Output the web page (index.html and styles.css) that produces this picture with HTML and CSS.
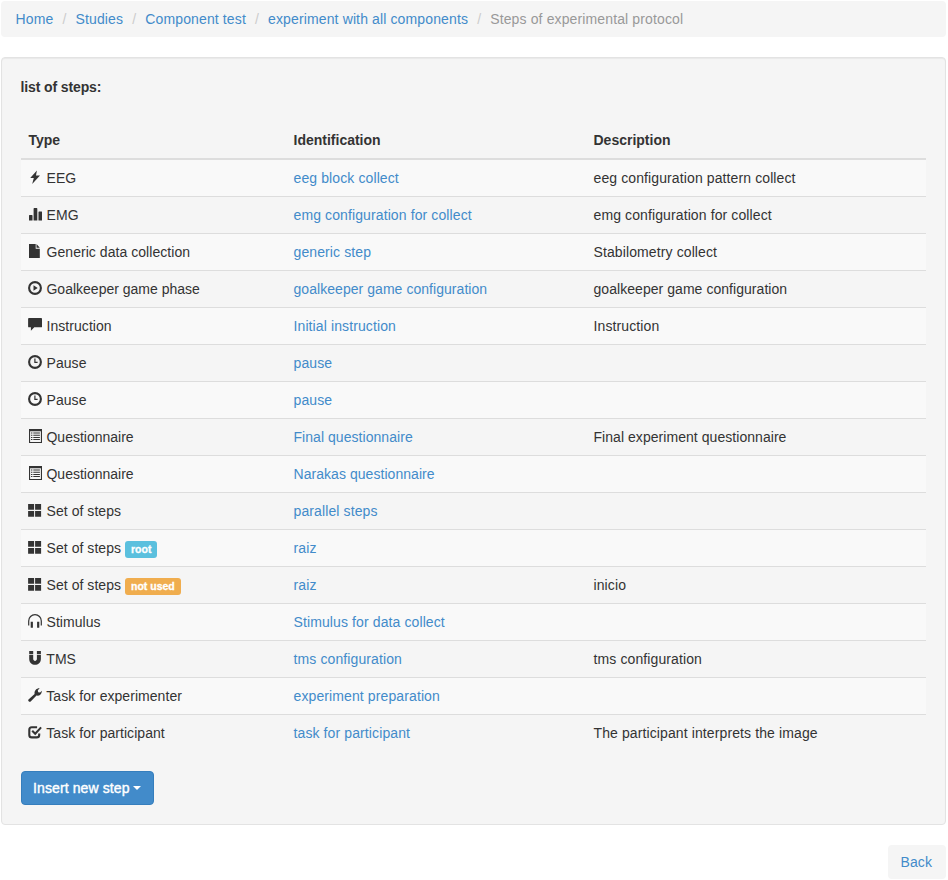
FILE: index.html
```html
<!DOCTYPE html>
<html lang="en">
<head>
<meta charset="utf-8">
<title>Steps of experimental protocol</title>
<link rel="stylesheet" href="styles.css">
</head>
<body>
<svg class="sprite" aria-hidden="true">
  <symbol id="bolt" viewBox="0 0 14 14"><path d="M8.9.4 2.2 8H5.8L4.2 13.9 12 5.4H8Z"/></symbol>
  <symbol id="bars" viewBox="0 0 14 14"><path d="M1 8.6q0-.6.6-.6h2.3q.6 0 .6.6V13.6H1ZM5.6 1.7q0-.6.6-.6h2.5q.6 0 .6.6V13.6H5.6ZM10.5 5.2q0-.6.6-.6h2.4q.6 0 .6.6V13.6h-3.6Z"/></symbol>
  <symbol id="file" viewBox="0 0 14 14"><path d="M1 0h6.7v4.7h4.1V14H1ZM8.5 0l3.3 3.8H8.5Z"/></symbol>
  <symbol id="play" viewBox="0 0 14 14"><circle class="line" cx="7" cy="7" r="5.9"/><path d="M5.5 4.3 9.7 7 5.5 9.7Z"/></symbol>
  <symbol id="comment" viewBox="0 0 14 14"><path d="M1 0h12.2q.9 0 .9.9V8.4q0 .9-.9.9H6.3L2.9 12.7V9.3H1q-.9 0-.9-.9V.9Q.1 0 1 0Z"/></symbol>
  <symbol id="clock" viewBox="0 0 14 14"><circle class="line" cx="7" cy="7" r="5.9"/><path class="thin" d="M6.9 3.4v3.9h2.7"/></symbol>
  <symbol id="list" viewBox="0 0 14 14"><path fill-rule="evenodd" d="M1 0h13v14H1ZM2.1 2.2V13h10.8V2.2Z"/><path d="M3 3.5h1.4v1H3zM5.3 3.5h6.6v1H5.3zM3 5.7h1.4v1H3zM5.3 5.7h6.6v1H5.3zM3 7.9h1.4v1H3zM5.3 7.9h6.6v1H5.3zM3 10.1h1.4v1H3zM5.3 10.1h6.6v1H5.3z"/></symbol>
  <symbol id="grid" viewBox="0 0 14 14"><path d="M.1 1h6v5.7h-6zM7.1 1h6v5.7h-6zM.1 8h6v5.8h-6zM7.1 8h6v5.8h-6z"/></symbol>
  <symbol id="phones" viewBox="0 0 14 14"><path class="thin" d="M.7 11.5V7a6.3 6.3 0 0 1 12.6 0v4.5"/><path d="M2.7 7.8h2.2v6H3.3q-.6 0-.6-.6zM9.1 7.8h2.2v5.4q0 .6-.6.6H9.1z"/></symbol>
  <symbol id="magnet" viewBox="0 0 14 14"><path d="M1.2 0h4v2.9h-4zM8.9 0h4v2.9h-4zM1.2 3.7h4v4.4c0 2.4 3.7 2.4 3.7 0V3.7h4V8c0 7.7-11.7 7.7-11.7 0Z"/></symbol>
  <symbol id="wrench" viewBox="0 0 14 14"><path d="M.5 11.4 6.6 6C6 3 8.3-.1 11.7.2L9.8 2.3l.4 1.9 1.9.4 1.7-1.9c.3 3.3-2.6 5.5-5.3 4.8L2.7 13.5c-1.3 1.1-3.3-.8-2.2-2.1Z"/></symbol>
  <symbol id="check" viewBox="0 0 14 14"><path class="line" d="M9.1 2.2H3.8Q1.3 2.2 1.3 4.7v5.2q0 2.5 2.5 2.5h4.9q2.5 0 2.5-2.5V8.6"/><path class="line" d="m4.2 5.8 3 3 5.9-6.4"/></symbol>
</svg>

<ol class="breadcrumb">
  <li><a href="#">Home</a></li>
  <li><a href="#">Studies</a></li>
  <li><a href="#">Component test</a></li>
  <li><a href="#">experiment with all components</a></li>
  <li class="active">Steps of experimental protocol</li>
</ol>

<main class="well">
  <p class="heading">list of steps:</p>
  <table class="table">
    <thead>
      <tr><th class="col-type">Type</th><th class="col-id">Identification</th><th>Description</th></tr>
    </thead>
    <tbody>
      <tr><td><svg class="icon"><use href="#bolt"/></svg> EEG</td><td><a href="#">eeg block collect</a></td><td>eeg configuration pattern collect</td></tr>
      <tr><td><svg class="icon"><use href="#bars"/></svg> EMG</td><td><a href="#">emg configuration for collect</a></td><td>emg configuration for collect</td></tr>
      <tr><td><svg class="icon"><use href="#file"/></svg> Generic data collection</td><td><a href="#">generic step</a></td><td>Stabilometry collect</td></tr>
      <tr class="tight"><td><svg class="icon"><use href="#play"/></svg> Goalkeeper game phase</td><td><a href="#">goalkeeper game configuration</a></td><td>goalkeeper game configuration</td></tr>
      <tr><td><svg class="icon"><use href="#comment"/></svg> Instruction</td><td><a href="#">Initial instruction</a></td><td>Instruction</td></tr>
      <tr><td><svg class="icon"><use href="#clock"/></svg> Pause</td><td><a href="#">pause</a></td><td></td></tr>
      <tr><td><svg class="icon"><use href="#clock"/></svg> Pause</td><td><a href="#">pause</a></td><td></td></tr>
      <tr class="tight"><td><svg class="icon"><use href="#list"/></svg> Questionnaire</td><td><a href="#">Final questionnaire</a></td><td>Final experiment questionnaire</td></tr>
      <tr class="tight"><td><svg class="icon"><use href="#list"/></svg> Questionnaire</td><td><a href="#">Narakas questionnaire</a></td><td></td></tr>
      <tr><td><svg class="icon"><use href="#grid"/></svg> Set of steps</td><td><a href="#">parallel steps</a></td><td></td></tr>
      <tr><td><svg class="icon"><use href="#grid"/></svg> Set of steps <span class="label label-info">root</span></td><td><a href="#">raiz</a></td><td></td></tr>
      <tr><td><svg class="icon"><use href="#grid"/></svg> Set of steps <span class="label label-warning">not used</span></td><td><a href="#">raiz</a></td><td>inicio</td></tr>
      <tr><td><svg class="icon"><use href="#phones"/></svg> Stimulus</td><td><a href="#">Stimulus for data collect</a></td><td></td></tr>
      <tr><td><svg class="icon"><use href="#magnet"/></svg> TMS</td><td><a href="#">tms configuration</a></td><td>tms configuration</td></tr>
      <tr><td><svg class="icon"><use href="#wrench"/></svg> Task for experimenter</td><td><a href="#">experiment preparation</a></td><td></td></tr>
      <tr><td><svg class="icon"><use href="#check"/></svg> Task for participant</td><td><a href="#">task for participant</a></td><td>The participant interprets the image</td></tr>
    </tbody>
  </table>
  <button class="btn btn-primary" type="button">Insert new step<span class="caret"></span></button>
</main>

<div class="actions"><a class="btn btn-back" href="#">Back</a></div>
</body>
</html>
```
FILE: styles.css
```css
* { box-sizing: border-box; }

body {
  margin: 0;
  padding: 1px 2px 0 1px;
  background: #fff;
  color: #333;
  font: 14px/20px "Liberation Sans", Arial, sans-serif;
  letter-spacing: 0.11px;
}

a { color: #428bca; text-decoration: none; }

.sprite { display: none; }

.breadcrumb {
  display: flex;
  height: 36px;
  margin: 0 0 20px;
  padding: 8px 14.5px;
  list-style: none;
  background: #f5f5f5;
  border-radius: 4px;
  letter-spacing: 0.13px;
}

.breadcrumb li + li::before {
  content: "/\00a0";
  padding: 0 5px 0 9.1px;
  color: #ccc;
}

.breadcrumb .active { color: #999; }

.well {
  height: 768px;
  padding: 19px;
  background: #f5f5f5;
  border: 1px solid #e3e3e3;
  border-radius: 4px;
  box-shadow: inset 0 1px 1px rgba(0, 0, 0, 0.05);
}

.heading {
  margin: 0 0 25px -0.5px;
  font-weight: bold;
  letter-spacing: -0.12px;
}

.table {
  width: 905px;
  margin-bottom: 20px;
  table-layout: fixed;
  border-spacing: 0;
}

.col-type { width: 264px; }
.col-id { width: 300px; }

th, td {
  padding: 8px 8px 8px 8.5px;
  text-align: left;
  vertical-align: top;
}

th { height: 38px; border-bottom: 2px solid #ddd; letter-spacing: 0; }
td { height: 37px; border-top: 1px solid #ddd; }
th:first-child, td:first-child { padding-left: 7.5px; }
td:first-child { letter-spacing: 0.05px; }
.tight td { letter-spacing: 0.05px; }
.tight td:first-child { letter-spacing: 0; }
tbody tr:first-child td { height: 36px; border-top: 0; }
tbody tr:nth-child(odd) { background: #f9f9f9; }

.icon {
  width: 14px;
  height: 14px;
  margin-left: -0.3px;
  margin-right: 0.4px;
  vertical-align: -1px;
  overflow: visible;
  fill: #333;
}

.line { fill: none; stroke: #333; stroke-width: 2.1; }
.thin { fill: none; stroke: #333; stroke-width: 1.2; }

.label {
  display: inline-block;
  height: 17px;
  margin: -2px 0 -5px;
  padding: 0 6px;
  border-radius: 3px;
  color: #fff;
  font-size: 10.5px;
  font-weight: bold;
  line-height: 17px;
  letter-spacing: 0;
  vertical-align: 0;
  -webkit-text-stroke: 0.3px #fff;
}

.label-info { background: #5bc0de; }
.label-warning { background: #f0ad4e; }

.btn {
  display: inline-flex;
  align-items: center;
  height: 34px;
  padding: 6px 12px;
  border: 1px solid transparent;
  border-radius: 4px;
  font: inherit;
  letter-spacing: inherit;
}

.btn-primary {
  width: 133px;
  padding: 6px 11px;
  color: #fff;
  background: #428bca;
  border-color: #357ebd;
  -webkit-text-stroke: 0.4px #fff;
}

.caret {
  margin-left: 3px;
  border-top: 4px solid #fff;
  border-right: 4px solid transparent;
  border-left: 4px solid transparent;
}

.actions {
  display: flex;
  justify-content: flex-end;
  margin-top: 20px;
}

.btn-back { width: 58px; padding: 6px 11.5px; background: #f5f5f5; }
```
